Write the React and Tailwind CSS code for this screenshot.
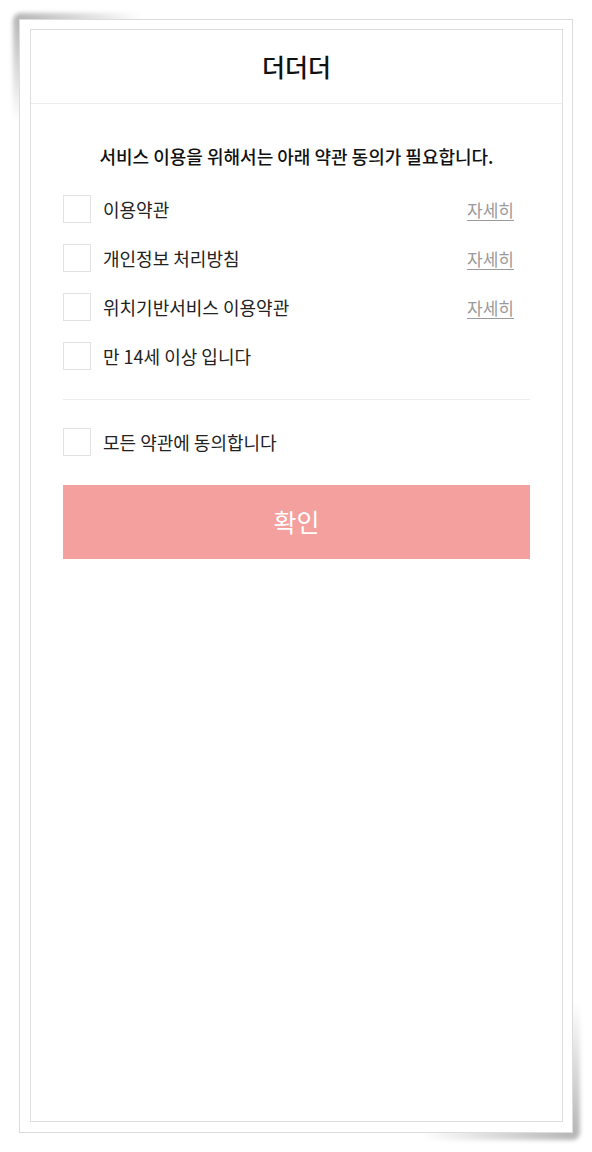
import { useState } from 'react'

const TERMS = [
  { id: 'terms', label: '이용약관', detail: true },
  { id: 'privacy', label: '개인정보 처리방침', detail: true },
  { id: 'location', label: '위치기반서비스 이용약관', detail: true },
  { id: 'age', label: '만 14세 이상 입니다', detail: false },
]

function Check({ checked, onClick }) {
  return (
    <button
      type="button"
      onClick={onClick}
      className="w-[28px] h-[28px] shrink-0 border border-[#e2e2e2] bg-white flex items-center justify-center"
    >
      {checked && (
        <svg width="16" height="16" viewBox="0 0 16 16" fill="none">
          <path d="M3 8.5l3.2 3L13 4.5" stroke="#f4a09e" strokeWidth="2" />
        </svg>
      )}
    </button>
  )
}

export default function App() {
  const [checked, setChecked] = useState({})
  const allChecked = TERMS.every((t) => checked[t.id])

  const toggle = (id) => setChecked((prev) => ({ ...prev, [id]: !prev[id] }))
  const toggleAll = () => {
    const next = {}
    TERMS.forEach((t) => { next[t.id] = !allChecked })
    setChecked(next)
  }

  return (
    <div
      className="w-[592px] h-[1152px] bg-white pt-[19px] pl-[19px]"
      style={{ fontFamily: '"Noto Sans CJK KR", "Noto Sans", sans-serif' }}
    >
      <div className="relative w-[554px] h-[1114px]">
        {/* curled paper shadows */}
        <div className="absolute -top-[6px] -left-[6px] w-[130px] h-[110px] rounded-tl-[8px] bg-[radial-gradient(ellipse_at_top_left,rgba(0,0,0,0.3),rgba(0,0,0,0)_70%)] blur-[2px]" />
        <div className="absolute -bottom-[7px] -right-[7px] w-[160px] h-[140px] rounded-br-[8px] bg-[radial-gradient(ellipse_at_bottom_right,rgba(0,0,0,0.3),rgba(0,0,0,0)_70%)] blur-[2px]" />

        <div className="relative w-full h-full border border-[#dcdcdc] bg-white pt-[9px] pl-[10px] pr-[9px] pb-[10px]">
          <div className="h-full border border-[#dedede] flex flex-col">
            <header className="h-[74px] shrink-0 border-b border-[#ececec] flex items-center justify-center">
              <h1 className="text-[25px] font-medium text-[#111] leading-none">더더더</h1>
            </header>

            <div className="px-8 pt-[40px] flex flex-col">
              <p className="text-center text-[18px] leading-[24px] font-medium text-[#111]">
                서비스 이용을 위해서는 아래 약관 동의가 필요합니다.
              </p>

              <ul className="mt-[27px] flex flex-col gap-[21px]">
                {TERMS.map((t) => (
                  <li key={t.id} className="flex items-center h-[28px]">
                    <Check checked={!!checked[t.id]} onClick={() => toggle(t.id)} />
                    <span className="ml-[12px] text-[18px] text-[#222] leading-none">{t.label}</span>
                    {t.detail && (
                      <a href="#" className="ml-auto mr-[16px] text-[17px] text-[#9a9a9a] underline underline-offset-[3px] leading-none">
                        자세히
                      </a>
                    )}
                  </li>
                ))}
              </ul>

              <div className="mt-[29px] h-px bg-[#ececec]" />

              <div className="mt-[28px] flex items-center h-[28px]">
                <Check checked={allChecked} onClick={toggleAll} />
                <span className="ml-[12px] text-[18px] text-[#222] leading-none">모든 약관에 동의합니다</span>
              </div>

              <button
                type="button"
                className="mt-[29px] h-[74px] w-full bg-[#f4a09e] text-white text-[25px] flex items-center justify-center"
              >
                확인
              </button>
            </div>
          </div>
        </div>
      </div>
    </div>
  )
}
